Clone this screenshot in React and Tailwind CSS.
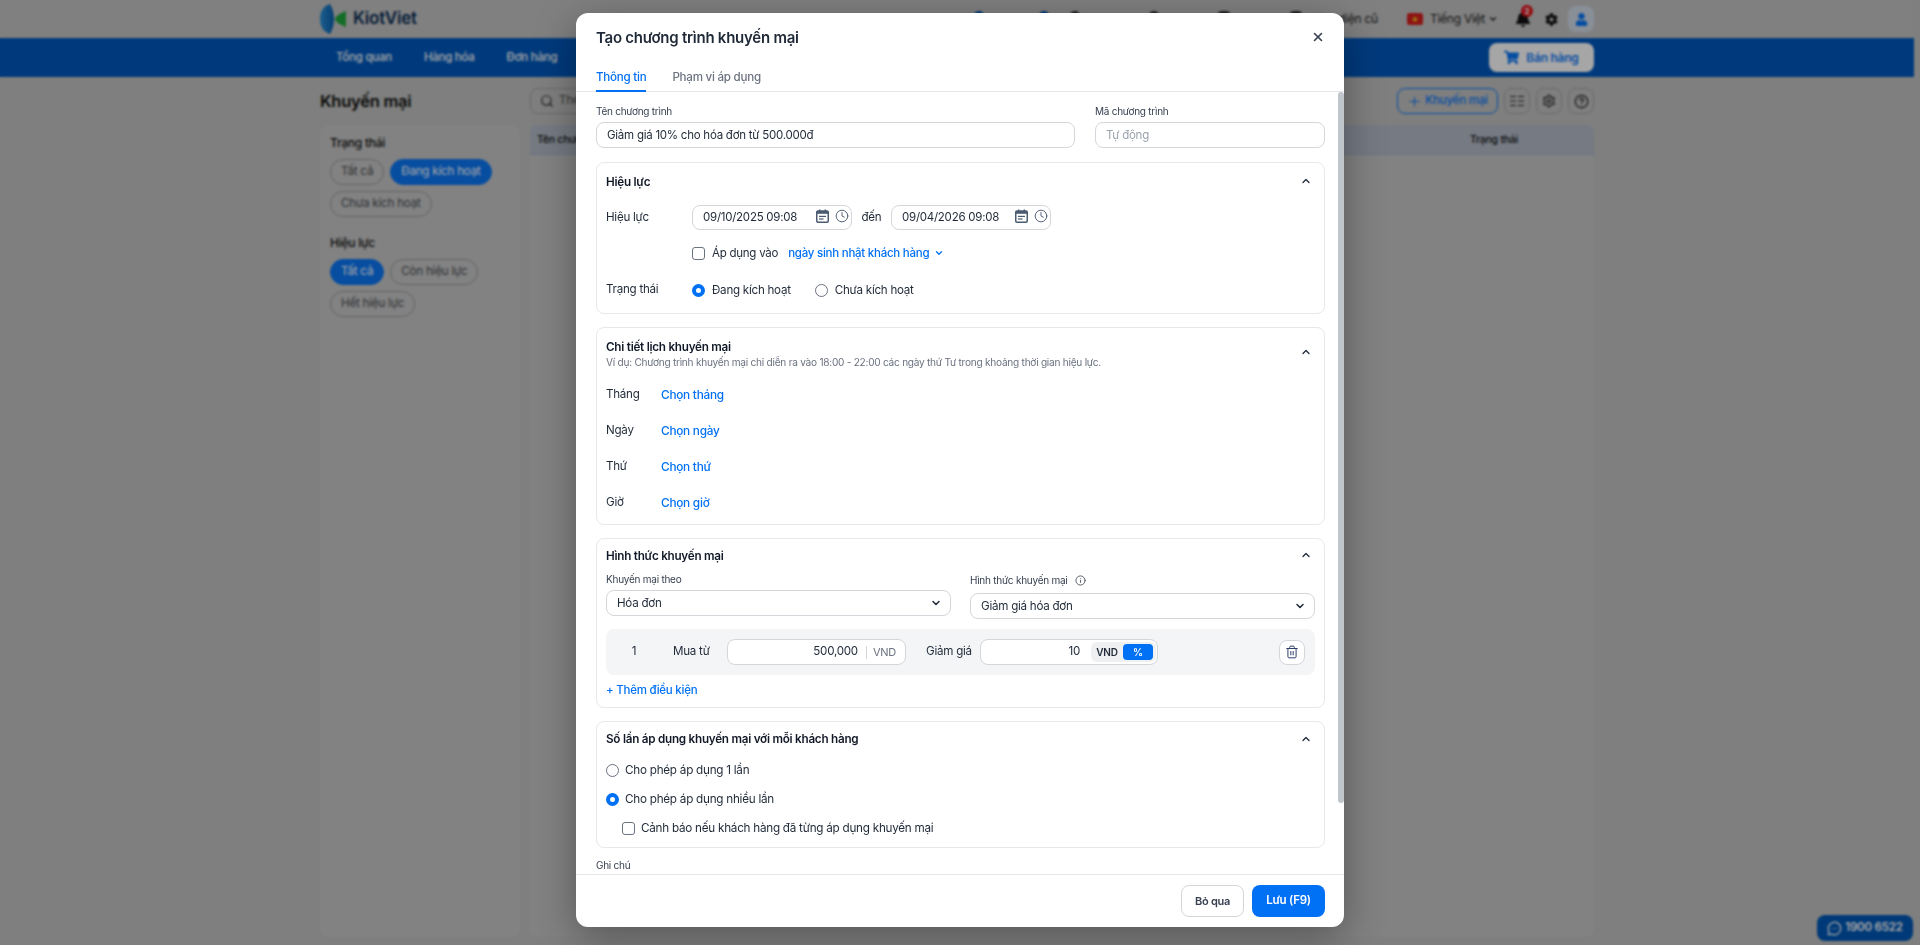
import React from 'react';
import { ChevronDown, ChevronUp, CircleHelp, Clock, Info, MessageCircleMore, Plus, Search, Settings, Trash2, X } from 'lucide-react';
import { FaBell, FaCog, FaShoppingCart, FaUser } from 'react-icons/fa';

const font = { fontFamily: 'Inter, "Noto Sans", sans-serif' };

const Logo = () => (
  <svg width="26" height="30" viewBox="0 0 26 30">
    <defs>
      <linearGradient id="lens" x1="0" x2="1" y1="0" y2="0">
        <stop offset="0" stopColor="#2b93dc" />
        <stop offset="1" stopColor="#0a5fae" />
      </linearGradient>
    </defs>
    <path d="M10 0 C3 2 0 8 0 15 C0 22 3 28 10 30 C13 25 14 20 14 15 C14 10 13 5 10 0 Z" fill="url(#lens)" />
    <path d="M26 7 C21 9 15 12 15 15 C15 18 21 21 26 23 C27 18 27 12 26 7 Z" fill="#1fa83c" />
  </svg>
);

const CalendarIcon = () => (
  <svg width="13" height="14" viewBox="0 0 13 14" className="shrink-0 -mt-[3px]">
    <rect x="0.75" y="2" width="11.5" height="11.25" rx="1.2" fill="none" stroke="#4b5b70" strokeWidth="1.5" />
    <rect x="0.75" y="2" width="11.5" height="2.8" fill="#4b5b70" />
    <rect x="3" y="0.5" width="1.4" height="2" fill="#4b5b70" />
    <rect x="8.6" y="0.5" width="1.4" height="2" fill="#4b5b70" />
    <rect x="3" y="6.8" width="7" height="1.2" fill="#4b5b70" />
    <rect x="3" y="9.4" width="4.5" height="1.2" fill="#4b5b70" />
  </svg>
);

const ColumnsIcon = () => (
  <svg width="14" height="12" viewBox="0 0 14 12" stroke="#222" strokeWidth="1">
    <path d="M0 1.5H6M8 1.5H14M0 6H6M8 6H14M0 10.5H6M8 10.5H14" />
  </svg>
);

const Chip = ({ children, active }) => (
  <span className={`h-[26px] px-[10px] flex items-center rounded-full border text-[11.7px] leading-none ${active ? 'bg-[#0b78f8] border-[#0b78f8] text-white' : 'border-[#9a9a9a] text-[#4a4f55]'}`}>
    {children}
  </span>
);

const Radio = ({ checked }) => (
  checked
    ? <span className="w-[13px] h-[13px] rounded-full border-[4px] border-[#0070f4] bg-white shrink-0" />
    : <span className="w-[13px] h-[13px] rounded-full border border-[#6b7280] bg-white shrink-0" />
);

const Checkbox = () => <span className="w-[13px] h-[13px] rounded-[3px] border border-[#6b7280] bg-white shrink-0" />;

const Section = ({ title, className, chevron, children }) => (
  <div className={`relative border border-[#e6e8eb] rounded-lg px-[9px] ${className}`}>
    <ChevronUp size={12} strokeWidth={2.5} className={`absolute right-[12px] text-[#1f2937] ${chevron}`} />
    <div className="h-[18px] flex items-center text-[11.7px] font-semibold text-[#111827]">{title}</div>
    {children}
  </div>
);

const DateField = ({ value }) => (
  <div className="w-[160px] h-[25px] border border-[#d3d6db] rounded-lg flex items-center pl-[10px] pr-[1px] text-[11.5px] text-[#1f2937] whitespace-nowrap">
    <span className="flex-1 pt-[1px]">{value}</span>
    <CalendarIcon />
    <Clock size={14} strokeWidth={1.6} className="ml-[6px] mr-[1px] -mt-[3px] text-[#4b5b70]" />
  </div>
);

const ScheduleRow = ({ label, link }) => (
  <div className="h-[36px] flex items-center text-[11.6px]">
    <span className="w-[55px] text-[#1f2937] -mt-[2px]">{label}</span>
    <span className="text-[#0070f4] font-medium text-[11.8px]">{link}</span>
  </div>
);

const Select = ({ value }) => (
  <div className="h-[26px] border border-[#d3d6db] rounded-lg flex items-center justify-between pl-[10px] pr-[8px] text-[11.6px] text-[#1f2937] bg-white">
    <span className="pt-[2px]">{value}</span>
    <ChevronDown size={12} strokeWidth={3} className="text-[#1f2937]" />
  </div>
);

const Background = () => (
  <div className="w-[1914px] h-full flex flex-col">
    <div className="h-[38px] bg-[#c5c5c5] shrink-0">
      <div className="w-[1274px] mx-auto h-full flex items-center">
        <Logo />
        <span className="ml-[7px] text-[17px] font-semibold text-[#0c2f57]">KiotViet</span>
        <div className="ml-auto flex items-center">
          <span className="w-[10px] h-[16px] rounded-t-full bg-[#0058b8]" />
          <span className="ml-[55px] w-[10px] h-[16px] rounded-t-full bg-[#0058b8]" />
          <span className="ml-[21px] w-[10px] h-[16px] rounded-t-full bg-[#333]" />
          <span className="ml-[69px] w-[10px] h-[16px] rounded-t-full bg-[#333]" />
          <span className="ml-[59px] w-[12px] h-[16px] rounded-t-sm bg-[#333]" />
          <span className="ml-[60px] w-[12px] h-[16px] rounded-t-sm bg-[#333] mr-[8px]" />
          <span className="text-xs text-[#222] mr-[29px]">Giao diện cũ</span>
          <svg width="16" height="12" viewBox="0 0 16 12" className="mr-[7px]">
            <rect width="16" height="12" rx="2.5" fill="#d8201f" />
            <path d="M8 3 L8.9 5.3 L11.2 5.3 L9.4 6.8 L10 9 L8 7.7 L6 9 L6.6 6.8 L4.8 5.3 L7.1 5.3 Z" fill="#f5c518" />
          </svg>
          <span className="text-xs text-[#222]">Tiếng Việt</span>
          <ChevronDown size={10} strokeWidth={3} className="ml-[3px] text-[#222]" />
          <div className="relative ml-[17px] mr-[14px]">
            <FaBell size={16} className="text-[#111]" />
            <span className="absolute -top-[6px] left-[6px] w-[12px] h-[12px] rounded-full bg-[#e3141c] text-white text-[8px] font-bold flex items-center justify-center">2</span>
          </div>
          <FaCog size={13} className="text-[#111] mr-[10px]" />
          <span className="w-[26px] h-[26px] rounded-lg bg-[#d3dce9] flex items-center justify-center">
            <FaUser size={13} className="text-[#0b78f8]" />
          </span>
        </div>
      </div>
    </div>
    <div className="h-[39px] bg-[#005ac0] shrink-0">
      <div className="w-[1274px] mx-auto h-full flex items-center text-[11.5px] font-medium text-white">
        <span className="ml-[16px]">Tổng quan</span>
        <span className="ml-[32px]">Hàng hóa</span>
        <span className="ml-[32px]">Đơn hàng</span>
        <span className="ml-auto w-[105px] h-[29px] rounded-lg bg-white flex items-center justify-center gap-[7px] text-xs font-semibold text-[#0b78f8]">
          <FaShoppingCart size={15} />Bán hàng
        </span>
      </div>
    </div>
    <div className="w-[1274px] mx-auto flex-1 flex flex-col min-h-0">
      <div className="flex items-center h-[26px] mt-[11px]">
        <span className="w-[210px] text-[16.5px] font-semibold text-[#111]">Khuyến mại</span>
        <div className="w-[500px] h-[26px] border border-[#a5a5a5] rounded-lg flex items-center pl-[9px] text-[11.6px] text-[#555]">
          <Search size={14} className="mr-[5px] text-[#333]" />Theo mã, tên chương trình
        </div>
        <div className="ml-auto flex items-center gap-[6px]">
          <span className="w-[101px] h-[26px] border border-[#0b78f8] rounded-lg flex items-center justify-center gap-[3px] text-[11.6px] font-medium text-[#0b78f8]">
            <Plus size={15} strokeWidth={1.6} />Khuyến mại
          </span>
          <span className="w-[26px] h-[26px] border border-[#a5a5a5] rounded-lg flex items-center justify-center"><ColumnsIcon /></span>
          <span className="w-[26px] h-[26px] border border-[#a5a5a5] rounded-lg flex items-center justify-center"><Settings size={14} className="text-[#222]" /></span>
          <span className="w-[26px] h-[26px] border border-[#a5a5a5] rounded-lg flex items-center justify-center"><CircleHelp size={15} className="text-[#222]" /></span>
        </div>
      </div>
      <div className="flex gap-[10px] mt-[11px] h-[812px]">
        <div className="w-[200px] bg-[#c8c8c8] rounded-lg px-[10px] pt-[10px]">
          <div className="h-[16px] flex items-center text-xs font-medium text-[#111]">Trạng thái</div>
          <div className="flex flex-wrap gap-[6px] mt-[8px]">
            <Chip>Tất cả</Chip>
            <Chip active>Đang kích hoạt</Chip>
            <Chip>Chưa kích hoạt</Chip>
          </div>
          <div className="h-[16px] flex items-center text-xs font-medium text-[#111] mt-[18px]">Hiệu lực</div>
          <div className="flex flex-wrap gap-[6px] mt-[8px]">
            <Chip active>Tất cả</Chip>
            <Chip>Còn hiệu lực</Chip>
            <Chip>Hết hiệu lực</Chip>
          </div>
        </div>
        <div className="flex-1 bg-[#c8c8c8] rounded-lg overflow-hidden">
          <div className="h-[30px] bg-[#b4bcc9] border-b border-[#a6b6cd] flex items-center text-[10.5px] font-medium text-[#111]">
            <span className="pl-[7px]">Tên chương trình</span>
            <span className="ml-auto w-[200px] text-center">Trạng thái</span>
          </div>
        </div>
      </div>
    </div>
  </div>
);

const Modal = () => (
  <div className="absolute left-[576px] top-[13px] w-[768px] h-[914px] bg-white rounded-xl overflow-hidden flex flex-col shadow-[0_10px_40px_rgba(0,0,0,0.35)]">
    <div className="h-[50px] shrink-0 pl-5 pr-[19px] flex items-center justify-between">
      <span className="text-[15px] font-semibold text-[#1f2937]">Tạo chương trình khuyến mại</span>
      <X size={14} strokeWidth={2.8} className="text-[#374151] -mt-[2px]" />
    </div>
    <div className="h-[29px] shrink-0 border-b border-[#e5e7eb] flex pl-5 gap-[26px] text-[11.6px] font-medium">
      <span className="h-[29px] pt-[6px] border-b-2 border-[#0070f4] text-[#0070f4]">Thông tin</span>
      <span className="pt-[6px] text-[#6b7280]">Phạm vi áp dụng</span>
    </div>
    <div className="relative flex-1 min-h-0 overflow-hidden">
      <div className="absolute right-0 top-0 w-[6px] h-[711px] rounded-full bg-[#c1c5cc]" />
      <div className="pl-5 pr-[19px] pt-[11px]">
        <div className="grid grid-cols-[479px_230px] gap-x-[20px]">
          <div>
            <div className="h-[16px] pt-[1px] flex items-center text-[10px] text-[#374151]">Tên chương trình</div>
            <div className="mt-[3px] h-[26px] pt-[1px] border border-[#d3d6db] rounded-lg flex items-center px-[10px] text-[11.5px] text-[#1f2937]">Giảm giá 10% cho hóa đơn từ 500.000đ</div>
          </div>
          <div>
            <div className="h-[16px] pt-[1px] flex items-center text-[10px] text-[#374151]">Mã chương trình</div>
            <div className="mt-[3px] h-[26px] pt-[1px] border border-[#d3d6db] rounded-lg flex items-center px-[10px] text-[11.5px] text-[#9ca3af]">Tự động</div>
          </div>
        </div>

        <Section title="Hiệu lực" chevron="top-[12px]" className="mt-[14px] h-[152px] pt-[11px]">
          <div className="flex items-center mt-[13px] text-[11.6px] text-[#1f2937]">
            <span className="w-[86px]">Hiệu lực</span>
            <DateField value="09/10/2025 09:08" />
            <span className="w-[39px] text-center">đến</span>
            <DateField value="09/04/2026 09:08" />
          </div>
          <div className="flex items-center h-[20px] mt-[13px] pl-[86px] text-[11.5px] text-[#1f2937]">
            <Checkbox />
            <span className="ml-[7px] pt-[1px]">Áp dụng vào</span>
            <span className="ml-[10px] pt-[1px] text-[#0070f4] font-medium">ngày sinh nhật khách hàng</span>
            <ChevronDown size={10} strokeWidth={3} className="ml-[5px] text-[#0070f4]" />
          </div>
          <div className="flex items-center h-[20px] mt-[17px] text-[11.6px] text-[#1f2937]">
            <span className="w-[86px]">Trạng thái</span>
            <Radio checked />
            <span className="ml-[7px] pt-[1px]">Đang kích hoạt</span>
            <span className="w-[24px]" />
            <Radio />
            <span className="ml-[7px] pt-[1px]">Chưa kích hoạt</span>
          </div>
        </Section>

        <Section title="Chi tiết lịch khuyến mại" chevron="top-[18px]" className="mt-[13px] h-[198px] pt-[11px]">
          <div className="h-[14px] -mt-[1px] flex items-center text-[10.1px] text-[#6b7280]">Ví dụ: Chương trình khuyến mại chỉ diễn ra vào 18:00 - 22:00 các ngày thứ Tư trong khoảng thời gian hiệu lực.</div>
          <div className="mt-[8px]">
            <ScheduleRow label="Tháng" link="Chọn tháng" />
            <ScheduleRow label="Ngày" link="Chọn ngày" />
            <ScheduleRow label="Thứ" link="Chọn thứ" />
            <ScheduleRow label="Giờ" link="Chọn giờ" />
          </div>
        </Section>

        <Section title="Hình thức khuyến mại" chevron="top-[10px]" className="mt-[13px] h-[170px] pt-[9px]">
          <div className="grid grid-cols-2 gap-x-[19px] mt-[5px]">
            <div>
              <div className="h-[16px] flex items-center text-[10px] text-[#374151]">Khuyến mại theo</div>
              <div className="mt-[3px]"><Select value="Hóa đơn" /></div>
            </div>
            <div className="pt-[1px]">
              <div className="h-[16px] flex items-center text-[10px] text-[#374151]">
                Hình thức khuyến mại
                <Info size={11} className="ml-[8px] text-[#4b5563]" />
              </div>
              <div className="mt-[5px]"><Select value="Giảm giá hóa đơn" /></div>
            </div>
          </div>
          <div className="mt-[10px] h-[46px] bg-[#f4f5f7] rounded-lg flex items-center text-[11.6px] text-[#1f2937]">
            <span className="w-[56px] text-center">1</span>
            <span className="ml-[11px] w-[54px]">Mua từ</span>
            <div className="w-[179px] h-[26px] bg-white border border-[#d3d6db] rounded-lg flex items-center justify-end pr-[9px]">
              500,000
              <span className="w-px h-[13px] bg-[#d3d6db] ml-[8px] mr-[6px]" />
              <span className="text-[#6b7280] text-[11px]">VND</span>
            </div>
            <span className="ml-[20px] w-[54px]">Giảm giá</span>
            <div className="w-[178px] h-[26px] bg-white border border-[#d3d6db] rounded-lg flex items-center justify-end pr-[1px]">
              10
              <div className="ml-[11px] w-[65px] h-[20px] bg-[#eff0f2] rounded-md flex items-center text-[10px] font-semibold">
                <span className="w-[32px] text-center">VND</span>
                <span className="w-[30px] h-[16px] bg-[#0070f4] rounded text-white flex items-center justify-center">%</span>
              </div>
            </div>
            <span className="ml-auto mr-[10px] w-[26px] h-[25px] bg-white border border-[#d3d6db] rounded-lg flex items-center justify-center">
              <Trash2 size={14} strokeWidth={1.7} className="text-[#2c3e66]" />
            </span>
          </div>
          <div className="mt-[8px] h-[16px] flex items-center text-[11.5px] font-medium text-[#0070f4]">+ Thêm điều kiện</div>
        </Section>

        <Section title="Số lần áp dụng khuyến mại với mỗi khách hàng" chevron="top-[11px]" className="mt-[13px] h-[127px] pt-[9px]">
          <div className="flex flex-col mt-[7px] text-[11.7px] text-[#1f2937]">
            <div className="h-[29px] flex items-center gap-[6px]"><Radio />Cho phép áp dụng 1 lần</div>
            <div className="h-[29px] flex items-center gap-[6px]"><Radio checked />Cho phép áp dụng nhiều lần</div>
            <div className="h-[29px] flex items-center gap-[6px] pl-[16px]"><Checkbox />Cảnh báo nếu khách hàng đã từng áp dụng khuyến mại</div>
          </div>
        </Section>

        <div className="mt-[9px] h-[16px] flex items-center text-[10px] text-[#374151]">Ghi chú</div>
      </div>
    </div>
    <div className="h-[53px] shrink-0 border-t border-[#e5e7eb] flex items-center justify-end gap-2 pr-[19px] font-semibold">
      <span className="w-[63px] h-[32px] border border-[#d3d6db] rounded-lg flex items-center justify-center text-[11px] text-[#374151]">Bỏ qua</span>
      <span className="w-[73px] h-[32px] bg-[#0070f4] rounded-lg flex items-center justify-center text-[11.5px] text-white">Lưu (F9)</span>
    </div>
  </div>
);

export default function App() {
  return (
    <div className="relative w-full h-[945px] overflow-hidden flex bg-[#c2c3c2] tracking-[-0.25px]" style={font}>
      <Background />
      <span className="absolute right-[7px] bottom-[4px] w-[96px] h-[26px] rounded-lg bg-[#0058b8] flex items-center justify-center gap-[3px] text-[11.6px] font-semibold text-white">
        <MessageCircleMore size={15} />1900 6522
      </span>
      <div className="absolute inset-0 bg-black/35 backdrop-blur-[1px]" />
      <Modal />
    </div>
  );
}
